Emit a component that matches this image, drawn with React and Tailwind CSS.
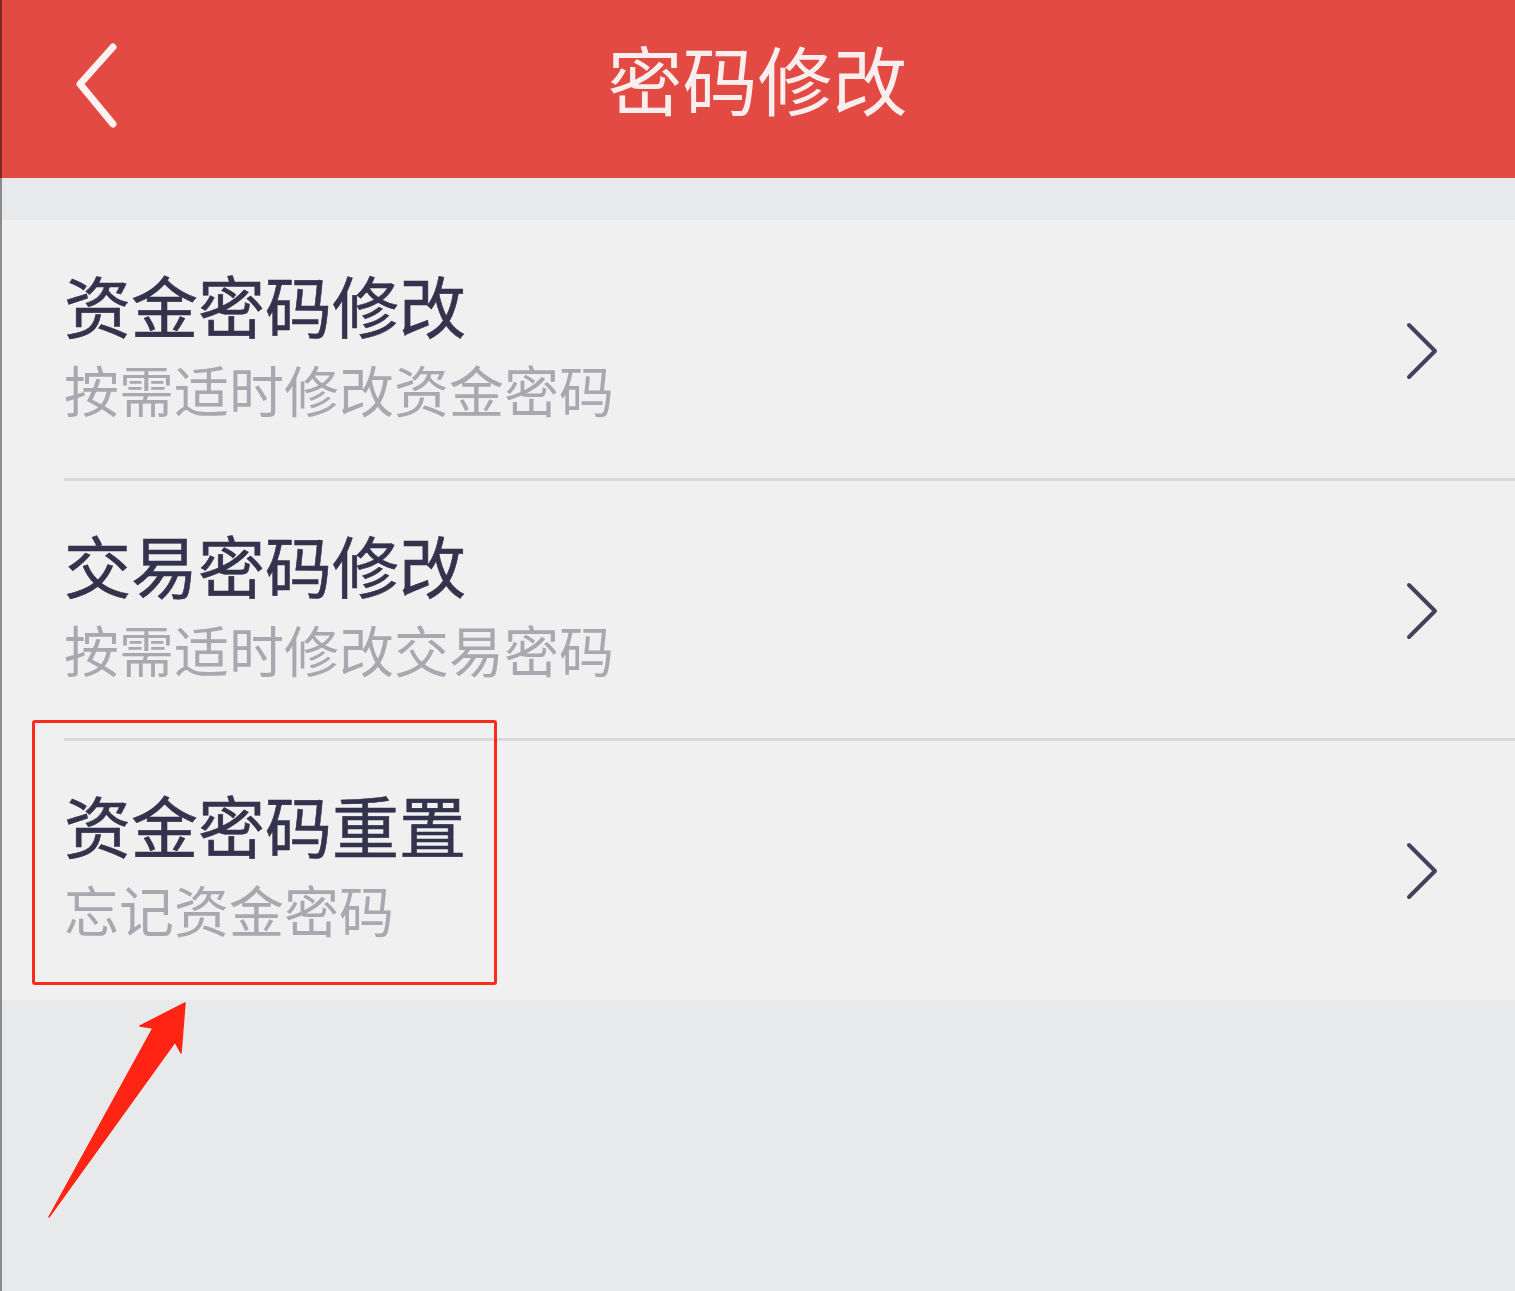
import React from "react";

const FONT = { fontFamily: '"Noto Sans CJK SC", "Noto Sans", sans-serif' };

function Chevron() {
  return (
    <svg width="40" height="64" viewBox="0 0 40 64" className="shrink-0">
      <polyline
        points="8,6 34,32 8,58"
        fill="none"
        stroke="#45425e"
        strokeWidth="4"
        strokeLinecap="round"
        strokeLinejoin="round"
      />
    </svg>
  );
}

function Row({ title, sub, divider }) {
  return (
    <div className="relative h-[260px] flex items-start">
      <div className="pl-[64px] pt-[50px] flex flex-col flex-1">
        <div className="text-[67px] leading-[67px] text-[#34324c] font-normal [-webkit-text-stroke:0.6px_#34324c]">{title}</div>
        <div className="mt-[24px] text-[55px] leading-[55px] text-[#a9a8b1]">{sub}</div>
      </div>
      <div className="self-center pr-[74px] pt-[2px]">
        <Chevron />
      </div>
      {divider && (
        <div className="absolute left-[64px] right-0 bottom-[-1px] h-[3px] bg-[#d9d9d9]" />
      )}
    </div>
  );
}

export default function App() {
  return (
    <div className="relative w-[1515px] h-[1291px] bg-[#e8e9eb] overflow-hidden" style={FONT}>
      <header className="relative h-[178px] bg-[#e24a43] flex items-center justify-center">
        <svg
          width="60"
          height="100"
          viewBox="0 0 60 100"
          className="absolute left-[66px] top-[37px]"
        >
          <polyline
            points="47,10 14,47 47,87"
            fill="none"
            stroke="#fbf3f2"
            strokeWidth="7"
            strokeLinecap="round"
            strokeLinejoin="round"
          />
        </svg>
        <h1 className="text-[75px] leading-[75px] text-[#f8eeee] pb-[24px]">密码修改</h1>
      </header>
      <div className="h-[42px]" />
      <div className="bg-[#f0f0f0]">
        <Row title="资金密码修改" sub="按需适时修改资金密码" divider />
        <Row title="交易密码修改" sub="按需适时修改交易密码" divider />
        <Row title="资金密码重置" sub="忘记资金密码" />
      </div>

      <div className="absolute left-[32px] top-[720px] w-[465px] h-[265px] border-[3px] border-[#ff2a1a] rounded-[3px]" />

      <svg className="absolute left-0 top-0" width="1515" height="1291" viewBox="0 0 1515 1291">
        <polygon
          points="185,1003 140,1026 153,1028 49,1217 175,1042 181,1053"
          fill="#ff2414"
          stroke="#ff2414"
          strokeWidth="1.5"
          strokeLinejoin="round"
        />
      </svg>

      <div className="absolute left-0 top-0 w-[2px] h-full bg-[#8c8c8c]" />
      <div className="absolute left-0 top-0 w-[2px] h-[178px] bg-[#7a2b28]" />
    </div>
  );
}
